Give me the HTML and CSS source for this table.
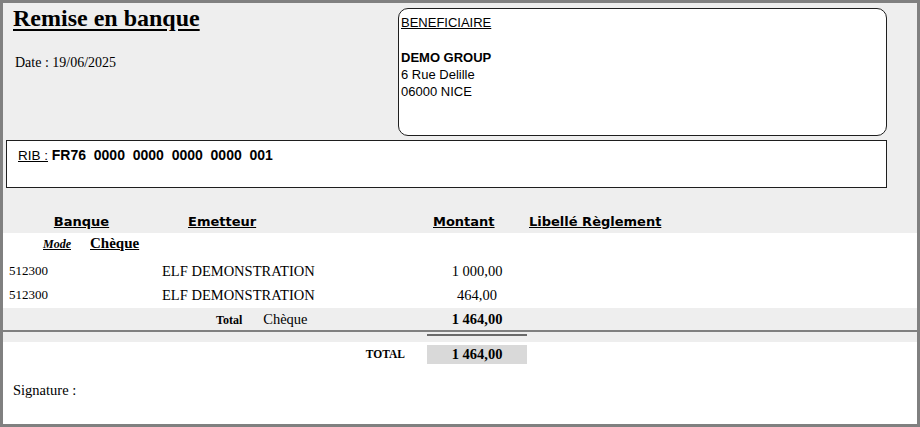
FILE: index.html
```html
<!DOCTYPE html>
<html lang="fr">
<head>
<meta charset="utf-8">
<title>Remise en banque</title>
<link rel="stylesheet" href="styles.css">
</head>
<body>
<div class="frame">
  <section class="top">
    <div class="head">
      <div class="head-left">
        <h1 class="title">Remise en banque</h1>
        <div class="date">Date : 19/06/2025</div>
      </div>
      <div class="benef">
        <div class="benef-label">BENEFICIAIRE</div>
        <div class="benef-line">&nbsp;</div>
        <div class="benef-line benef-name">DEMO GROUP</div>
        <div class="benef-line">6 Rue Delille</div>
        <div class="benef-line">06000 NICE</div>
      </div>
    </div>
    <div class="rib"><span class="rib-label">RIB :</span> <span class="rib-num">FR76  0000  0000  0000  0000  001</span></div>
    <div class="cols">
      <span class="col-h h-banque">Banque</span>
      <span class="col-h h-emetteur">Emetteur</span>
      <span class="col-h h-montant">Montant</span>
      <span class="col-h h-libelle">Libellé Règlement</span>
    </div>
  </section>

  <section class="list">
    <div class="mode-row">
      <span class="mode-label">Mode</span>
      <span class="mode-name">Chèque</span>
    </div>
    <div class="row">
      <span class="c-banque">512300</span>
      <span class="c-emetteur">ELF DEMONSTRATION</span>
      <span class="c-montant">1 000,00</span>
      <span></span>
    </div>
    <div class="row">
      <span class="c-banque">512300</span>
      <span class="c-emetteur">ELF DEMONSTRATION</span>
      <span class="c-montant">464,00</span>
      <span></span>
    </div>
    <div class="subtotal">
      <span></span>
      <span class="sub-label"><b class="sub-total">Total</b><span class="sub-mode">Chèque</span></span>
      <span class="sub-amount">1 464,00</span>
      <span></span>
    </div>
    <div class="rule"></div>
    <div class="subband"><div class="short-rule"></div></div>
    <div class="grand">
      <span></span>
      <span class="grand-label">TOTAL</span>
      <span class="grand-amount">1 464,00</span>
      <span></span>
    </div>
    <div class="signature">Signature :</div>
  </section>
</div>
</body>
</html>
```

FILE: styles.css
```css
html, body {
  margin: 0;
  padding: 0;
  background: #ffffff;
}

.frame {
  width: 920px;
  height: 427px;
  box-sizing: border-box;
  border: 3px solid #808080;
  background: #ffffff;
  overflow: hidden;
  font-family: "Liberation Serif", "Times New Roman", serif;
  color: #000;
}

/* ---------- top grey area ---------- */
.top {
  background: #eeeeee;
  height: 230px;
}

.head {
  display: flex;
  height: 133px;
}

.head-left {
  width: 395px;
  padding-left: 10px;
  box-sizing: border-box;
}

.title {
  margin: 0;
  padding-top: 1px;
  font-size: 24px;
  line-height: 28px;
  font-weight: bold;
  text-decoration: underline;
  text-underline-offset: 3px;
}

.date {
  margin-top: 22px;
  padding-left: 2px;
  font-size: 14px;
  line-height: 18px;
}

.benef {
  margin-top: 5px;
  width: 489px;
  height: 128px;
  box-sizing: border-box;
  border: 1px solid #1e1e1e;
  border-radius: 10px;
  background: #ffffff;
  padding: 5px 2px 0 2px;
  font-family: "Liberation Sans", Arial, sans-serif;
  font-size: 13px;
  line-height: 17.3px;
}

.benef-label {
  font-size: 13px;
  text-decoration: underline;
}

.benef-name {
  font-weight: bold;
  font-size: 13px;
}

.rib {
  margin: 4px 30px 0 3px;
  height: 48px;
  box-sizing: border-box;
  border: 1px solid #1e1e1e;
  background: #ffffff;
  padding: 6px 0 0 11px;
  font-family: "Liberation Sans", Arial, sans-serif;
  font-size: 13.5px;
  line-height: 17px;
  white-space: pre;
}

.rib-label {
  text-decoration: underline;
}

.rib-num {
  font-weight: bold;
  font-size: 14px;
}

.cols {
  display: grid;
  grid-template-columns: 157px 266px 102px 1fr;
  align-items: end;
  height: 45px;
  box-sizing: border-box;
  padding-bottom: 3px;
  font-family: "DejaVu Sans", Verdana, sans-serif;
  font-weight: bold;
  font-size: 13px;
  line-height: 16px;
}

.col-h {
  text-decoration: underline;
}

.h-banque { justify-self: center; }
.h-emetteur { padding-left: 28px; }
.h-montant { padding-left: 7px; }
.h-libelle { padding-left: 1px; }

/* ---------- list ---------- */
.mode-row {
  display: flex;
  align-items: baseline;
  gap: 19px;
  height: 26px;
  padding-left: 40px;
  line-height: 21px;
}

.mode-label {
  font-size: 12px;
  font-weight: bold;
  font-style: italic;
  text-decoration: underline;
}

.mode-name {
  font-size: 15px;
  font-weight: bold;
  text-decoration: underline;
}

.row,
.subtotal,
.grand {
  display: grid;
  grid-template-columns: 157px 266px 102px 1fr;
}

.row {
  height: 24px;
  line-height: 24px;
  font-size: 14.5px;
}

.c-banque {
  padding-left: 6px;
  font-size: 13px;
}

.c-emetteur {
  padding-left: 2px;
}

.c-montant {
  text-align: center;
}

.subtotal {
  margin-top: 1px;
  height: 22px;
  line-height: 22px;
  background: #eeeeee;
}

.sub-label {
  display: flex;
  align-items: baseline;
  gap: 21px;
  padding-left: 56px;
}

.sub-total {
  font-size: 12px;
}

.sub-mode {
  font-size: 14.5px;
}

.sub-amount {
  text-align: center;
  font-weight: bold;
  font-size: 14.5px;
}

.rule {
  height: 2px;
  background: #808080;
}

.subband {
  height: 10px;
  background: #eeeeee;
  padding-top: 2px;
  box-sizing: border-box;
}

.short-rule {
  margin-left: 424px;
  width: 100px;
  height: 2px;
  background: #6a6a6a;
}

.grand {
  margin-top: 3px;
  height: 19px;
  line-height: 19px;
}

.grand-label {
  text-align: right;
  padding-right: 21px;
  font-weight: bold;
  font-size: 11.5px;
}

.grand-amount {
  margin: 0 1px;
  background: #d9d9d9;
  text-align: center;
  font-weight: bold;
  font-size: 14.5px;
}

.signature {
  margin-top: 17px;
  padding-left: 10px;
  font-size: 14.5px;
  line-height: 18px;
}
```
